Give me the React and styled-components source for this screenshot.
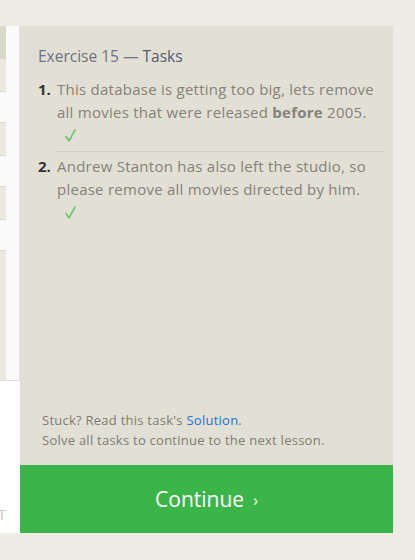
import React from "react";
import styled, { createGlobalStyle } from "styled-components";

const GlobalStyle = createGlobalStyle`
  html, body {
    margin: 0;
    padding: 0;
    background: #efece5;
  }
  * {
    box-sizing: border-box;
  }
`;

const Page = styled.div`
  display: flex;
  align-items: flex-start;
  padding-top: 26px;
  height: 560px;
  font-family: "Open Sans", "Noto Sans", sans-serif;
`;

const LeftSide = styled.div`
  width: 20px;
  height: 507px;
  display: flex;
  flex-direction: column;
`;

const EditorArea = styled.div`
  display: flex;
  height: 354px;
  border-right: 1px solid #e4e2da;
`;

const TableColumn = styled.div`
  width: 6px;
  display: flex;
  flex-direction: column;
  background: #ebe9e1;
`;

const TableHead = styled.div`
  height: 33px;
  background: #d9d8cd;
`;

const TableRow = styled.div`
  height: 32px;
  background: ${(p) => (p.$odd ? "#fafaf9" : "#ebe9e1")};
  border-top: ${(p) => (p.$odd ? "1px solid #dcdad2" : "none")};
  border-bottom: ${(p) => (p.$odd ? "1px solid #dcdad2" : "none")};
`;

const ScrollStrip = styled.div`
  flex: 1;
  background: #fafafa;
`;

const ButtonArea = styled.div`
  flex: 1;
  background: #ffffff;
  border-top: 1px solid #e2e0d9;
  display: flex;
  align-items: flex-end;
  justify-content: flex-end;
  overflow: hidden;
  padding-bottom: 9px;
`;

const ResetLabel = styled.span`
  font-size: 15px;
  color: #c9c9c9;
  letter-spacing: 1px;
  white-space: nowrap;
  margin-right: 13px;
`;

const Panel = styled.div`
  width: 373px;
  height: 507px;
  background: #e2dfd4;
  display: flex;
  flex-direction: column;
`;

const Content = styled.div`
  padding: 19px 8px 0 18px;
`;

const Heading = styled.h2`
  margin: 0 0 8px;
  font-size: 15.5px;
  font-weight: 400;
  line-height: 22px;
  color: #6d7385;

  strong {
    color: #535a6d;
    font-weight: 400;
  }
`;

const TaskList = styled.ol`
  list-style: none;
  margin: 0;
  padding: 0;
`;

const Task = styled.li`
  display: grid;
  grid-template-columns: 19px 1fr;
  padding: 3px 0 4px;
  font-size: 15px;
  letter-spacing: 0.25px;
  line-height: 23px;
  color: #85827a;
`;

const Divider = styled.li`
  height: 1px;
  margin: 0 0 0 18px;
  background: #d4d1c6;
`;

const Num = styled.span`
  font-weight: 700;
  color: #333333;
  letter-spacing: 0;
`;

const Text = styled.div`
  b {
    font-weight: 700;
  }
`;

const Check = styled.div`
  height: 23px;
  padding: 5px 0 0 8px;

  svg {
    display: block;
  }
`;

const Footer = styled.div`
  margin-top: auto;
  padding: 0 0 15px 22px;
  font-size: 13px;
  letter-spacing: 0.25px;
  line-height: 20px;
  color: #7f7c74;

  a {
    color: #1f6fd6;
    text-decoration: none;
  }
`;

const ContinueButton = styled.button`
  height: 68px;
  border: none;
  background: #3bb54a;
  color: #ffffff;
  font-family: inherit;
  font-size: 21px;
  display: flex;
  align-items: center;
  justify-content: center;
  gap: 9px;
  cursor: pointer;
  padding: 0;
`;

const Chevron = styled.span`
  font-size: 16px;
  line-height: 1;
  margin-top: 2px;
`;

const CheckIcon = () => (
  <svg width="11" height="13" viewBox="0 0 11 13">
    <path
      d="M1 7.5 L4 11.8 L10 1"
      fill="none"
      stroke="#6dc26f"
      strokeWidth="1.6"
      strokeLinecap="round"
      strokeLinejoin="round"
    />
  </svg>
);

const rows = [false, true, false, true, false, true];

export default function App() {
  return (
    <>
      <GlobalStyle />
      <Page>
        <LeftSide>
          <EditorArea>
            <TableColumn>
              <TableHead />
              {rows.map((odd, i) => (
                <TableRow key={i} $odd={odd} />
              ))}
            </TableColumn>
            <ScrollStrip />
          </EditorArea>
          <ButtonArea>
            <ResetLabel>RESET</ResetLabel>
          </ButtonArea>
        </LeftSide>

        <Panel>
          <Content>
            <Heading>
              Exercise 15 — <strong>Tasks</strong>
            </Heading>
            <TaskList>
              <Task>
                <Num>1.</Num>
                <Text>
                  This database is getting too big, lets remove all movies
                  that were released <b>before</b> 2005.
                  <Check>
                    <CheckIcon />
                  </Check>
                </Text>
              </Task>
              <Divider aria-hidden="true" />
              <Task>
                <Num>2.</Num>
                <Text>
                  Andrew Stanton has also left the studio, so please remove
                  all movies directed by him.
                  <Check>
                    <CheckIcon />
                  </Check>
                </Text>
              </Task>
            </TaskList>
          </Content>
          <Footer>
            Stuck? Read this task's <a href="#">Solution</a>.
            <br />
            Solve all tasks to continue to the next lesson.
          </Footer>
          <ContinueButton>
            Continue <Chevron>›</Chevron>
          </ContinueButton>
        </Panel>
      </Page>
    </>
  );
}
